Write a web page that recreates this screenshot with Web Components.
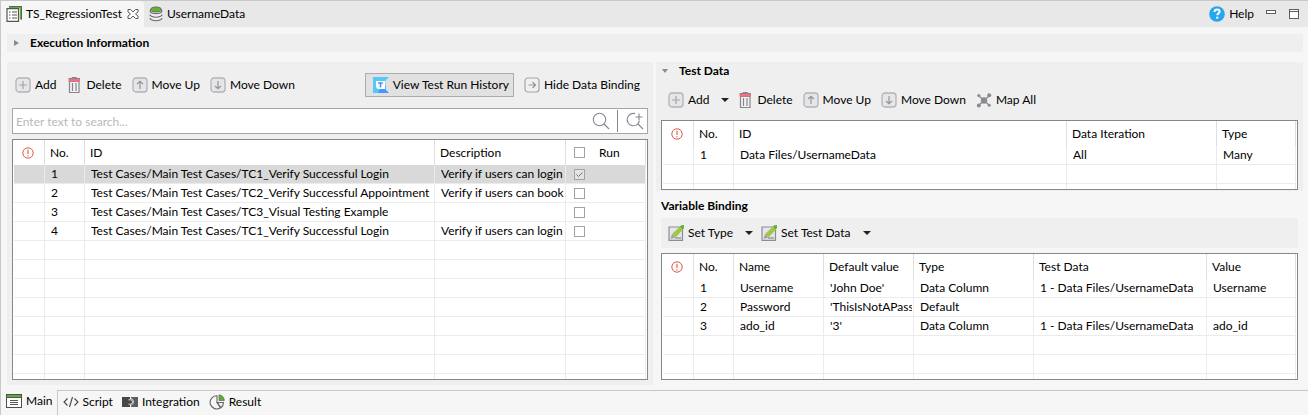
<!DOCTYPE html>
<html lang="en">
<head>
<meta charset="utf-8">
<title>TS_RegressionTest</title>
<style>
  html, body { margin: 0; height: 100%; }
  body { font: 12px/16px Lato, "Segoe UI", sans-serif; color: #000; background: #f6f6f6; }
</style>
</head>
<body>
<suite-editor></suite-editor>
<script>
const boxed = inner => `<svg width="16" height="16" viewBox="0 0 16 16" fill="none"><rect x="1" y="1" width="14" height="14" rx="3" fill="#e6e6e8" stroke="#b2b3b9" stroke-width="1.3"/>${inner}</svg>`;
const ICONS = {
  suite: `<svg width="16" height="16" viewBox="0 0 16 16" fill="none"><path d="M3 1h12v12.500" stroke="#5fae2f" stroke-width="2.400"/><path d="M3 .5h12.500v13" stroke="#555" stroke-width=".8"/><path d="M1 2.600h11.500v12.800h-11.500z" fill="#fff" stroke="#555" stroke-width="1.200"/><path d="M3 6h1.500m1.500 0h5M3 9h1.500m1.500 0h5M3 12h1.500m1.500 0h5" stroke="#555"/></svg>`,
  data: `<svg width="14" height="16" viewBox="0 0 14 16" fill="none"><path d="M1.500 3.500v9.500c0 1 2.500 2 5.500 2s5.500-1 5.500-2v-9.500" fill="#eee"/><ellipse cx="7" cy="3.500" rx="5.500" ry="2.500" fill="#5fb62d" stroke="#666"/><path d="M1.200 5.500c0 1 2.600 2.200 5.800 2.200s5.800-1.200 5.800-2.200M1.200 9c0 1 2.600 2.200 5.800 2.200s5.800-1.200 5.800-2.200M1.200 12.500c0 1 2.600 2.300 5.800 2.300s5.800-1.300 5.800-2.300" stroke="#666" stroke-width="1.100"/><path d="M1.300 4v2M12.700 4v2M1.300 8.500v1.500M12.700 8.500v1.500M1.300 12v1M12.700 12v1" stroke="#666"/></svg>`,
  close: `<svg width="12" height="12" viewBox="0 0 12 12" fill="#fff" stroke="#4a4a4a" stroke-width=".9"><path d="M1 1.500h2.500L6 4l2.500-2.500H11V4L8.500 6 11 8v2.500H8.500L6 8 3.500 10.500H1V8l2.500-2L1 4z"/></svg>`,
  help: `<svg width="16" height="16" viewBox="0 0 16 16"><circle cx="8" cy="8" r="7.800" fill="#26a6ee"/><path d="M5.500 6c0-1.600 1.100-2.500 2.600-2.500s2.500.9 2.500 2.200c0 1.700-2.300 1.700-2.300 3.500" fill="none" stroke="#fff" stroke-width="2"/><rect x="7.200" y="10.700" width="2.100" height="2" fill="#fff"/></svg>`,
  min: `<svg width="12" height="12" viewBox="0 0 12 12"><rect x="1.500" y="2.500" width="9" height="3" fill="#fff" stroke="#5d5d5d"/></svg>`,
  max: `<svg width="12" height="12" viewBox="0 0 12 12"><rect x="1.500" y="1.500" width="9" height="9" fill="#fff" stroke="#5d5d5d"/><path d="M1.500 3.500h9" stroke="#5d5d5d"/></svg>`,
  add: boxed(`<path d="M8 4v8M4 8h8" stroke="#a3a4ab" stroke-width="1.200"/>`),
  up: boxed(`<path d="M8 12V4.500M5 7l3-2.800L11 7" stroke="#92949c" stroke-width="1.200"/>`),
  down: boxed(`<path d="M8 4v7.500M5 9l3 2.800L11 9" stroke="#92949c" stroke-width="1.200"/>`),
  right: `<svg width="16" height="16" viewBox="0 0 16 16" fill="none"><rect x="1" y="1" width="14" height="14" rx="3" fill="#f0f0f0" stroke="#a5a6aa" stroke-width="1.200"/><path d="M4.500 8h7M8.500 5l3 3-3 3" stroke="#92949c" stroke-width="1.200"/></svg>`,
  trash: `<svg width="16" height="16" viewBox="0 0 16 16" fill="none"><path d="M6 1.500V.5h4.500v1" stroke="#85868d"/><path d="M3.500 4.500h9.500v11H3.500z" fill="#f3f3f4" stroke="#85868d" stroke-width="1.200"/><path d="M2.500 3.200h11.500" stroke="#f5707c" stroke-width="2.800"/><path d="M2.500 1.500h11.500" stroke="#85868d"/><path d="M6.500 6v8M10 6v8" stroke="#85868d" stroke-width="1.200"/></svg>`,
  map: `<svg width="16" height="16" viewBox="0 0 16 16" fill="#888b91"><path d="M3 4l10 9M3 13L13 4" stroke="#888b91" stroke-width="1.300"/><circle cx="8" cy="8.500" r="3.200"/><circle cx="2.800" cy="3.500" r="1.600"/><circle cx="13.200" cy="3.200" r="2"/><circle cx="2.800" cy="13.500" r="2"/><circle cx="13.200" cy="13.200" r="1.500"/></svg>`,
  edit: `<svg width="16" height="16" viewBox="0 0 16 16"><path d="M1 2h13.500v13.300H1z" fill="#e6e6e9" stroke="#8b8d96" stroke-width="1.200"/><path d="M7 13h6" stroke="#777"/><path d="M4 9L12 1.500l3 3L7.500 12.500z" fill="#9fc64a"/><path d="M12 1.700L13.200.3 16 .1v2.900l-1.200 1.500z" fill="#62b22e"/><path d="M4 9l3.500 3.500L2.500 14z" fill="#a0a1a8"/></svg>`,
  testops: `<svg width="16" height="16" viewBox="0 0 16 16"><path d="M0 0h16l-3.500 3.500v9L16 16H0z" fill="#56c9fb"/><path d="M5 16h11l-3.500-3.500V8L6 13z" fill="#4a97fb"/><path d="M3 4h9v8H6A3 3 0 0 1 3 9z" fill="#fff"/><path d="M5 6h5M7.500 6v4.500" stroke="#4a97e8" stroke-width="1.600"/></svg>`,
  search: `<svg width="18" height="18" viewBox="0 0 18 18" fill="none" stroke="#85878f" stroke-width="1.100"><circle cx="7.500" cy="7.500" r="6.200"/><path d="M12 12l5 5"/></svg>`,
  searchadd: `<svg width="18" height="18" viewBox="0 0 18 18" fill="none" stroke="#85878f" stroke-width="1.100"><path d="M9 1.600A6.200 6.200 0 1 0 13.400 9M12 12l5 5M13 1.500v7M9.500 5h7"/></svg>`,
  alert: `<svg width="12" height="12" viewBox="0 0 12 12" role="img" aria-label="Problems"><circle cx="6" cy="6" r="5.200" fill="#fff" stroke="#e2574c"/><path d="M6 2.700v4.200M6 8.200v1.200" stroke="#e2574c" stroke-width="1.100"/></svg>`,
  main: `<svg width="16" height="14" viewBox="0 0 16 14"><rect x=".5" y=".5" width="15" height="13" fill="#fff" stroke="#4d4d4d"/><path d="M1 2h14" stroke="#5fae2f" stroke-width="2"/><path d="M0 3.500h16M4 6.500h8M4 8.500h8M4 10.500h8" stroke="#555"/></svg>`,
  script: `<svg width="16" height="12" viewBox="0 0 16 12" fill="none" stroke="#444" stroke-width="1.100"><path d="M4.500 2.500L1 6l3.500 3.500M11.500 2.500L15 6l-3.500 3.500M9.500 1L6.500 11"/></svg>`,
  integration: `<svg width="16" height="12" viewBox="0 0 16 12"><path d="M0 1h8v2a3 3 0 0 1 0 6v2H0z" fill="#474747"/><path d="M9 1h7v10H9V9.800a4 4 0 0 0 0-7.600z" fill="#5d5d5d"/><path d="M6.500 3.800h2c2.600.3 2.600 4.100 0 4.400h-2" stroke="#fff" fill="none" stroke-width=".9"/></svg>`,
  result: `<svg width="16" height="16" viewBox="0 0 16 16" fill="none"><path d="M8 1.800A6.600 6.600 0 1 0 11.500 13.800L8 8.500z" stroke="#666" stroke-width="1.100"/><path d="M8.300 8.500h6.200c0 2.300-1 4-2.500 5.200z" stroke="#666" stroke-width="1.100"/><path d="M10 6.500V.8c3 .3 5.200 2.500 5.300 5.700z" fill="#5fae2f" stroke="#666" stroke-width=".7"/></svg>`,
  drop: `<svg width="8" height="4" viewBox="0 0 8 4"><path d="M0 0h8L4 4z" fill="#222"/></svg>`
};

const define = (name, css, html) => customElements.define(name, class extends HTMLElement {
  constructor() {
    super();
    this.attachShadow({ mode: "open" });
  }
  connectedCallback() {
    const t = document.createElement("template");
    t.innerHTML = `<style>*{box-sizing:border-box}svg{display:block;flex:none}${css}</style>${typeof html === "function" ? html(this) : html}`;
    this.shadowRoot.replaceChildren(t.content.cloneNode(true));
  }
});

define("tool-button", `
  :host { display: block; flex: none; }
  button { display: flex; align-items: center; gap: 4px; height: 24px; padding: 0; border: 0; background: none; font: inherit; color: inherit; white-space: nowrap; }
  :host([framed]) button { padding: 0 4px 0 7px; border: 1px solid #adadad; background: #e1e1e1; }
`, el => `<button type="button" ${el.getAttribute("label") ? `aria-label="${el.getAttribute("label")}"` : ""}>${ICONS[el.getAttribute("icon")]}<slot></slot></button>`);

define("tool-bar", `
  :host { display: flex; align-items: center; gap: 10px; }
`, `<slot></slot>`);

define("menu-arrow", `
  :host { display: block; flex: none; }
  button { display: flex; align-items: center; height: 24px; width: 12px; padding: 0 2px; border: 0; background: none; }
`, el => `<button type="button" aria-label="${el.getAttribute("label")}">${ICONS.drop}</button>`);

define("editor-tab", `
  :host { display: flex; flex: none; }
  button { display: flex; align-items: center; gap: 4px; height: 26px; padding: 0 5px; border: 0; background: none; font: inherit; color: inherit; white-space: nowrap; }
  :host([active]) { background: #f6f6f6; border-radius: 0 4px 0 0; }
  .x { padding: 0 5px 0 0; }
`, el => `<button type="button">${ICONS[el.getAttribute("icon")]}<slot></slot></button>${el.hasAttribute("active") ? `<button type="button" class="x" aria-label="Close tab">${ICONS.close}</button>` : ""}`);

define("section-title", `
  :host { display: block; }
  button { display: flex; align-items: center; width: 100%; height: 18px; padding: 0; border: 0; background: none; font: inherit; font-weight: 700; color: inherit; text-align: left; }
  i { flex: none; width: 23px; padding-left: 7px; }
  :host([open]) i { padding-left: 6px; }
`, el => `<button type="button" aria-expanded="${el.hasAttribute("open")}"><i>${el.hasAttribute("open")
    ? `<svg width="6" height="4" viewBox="0 0 6 4"><path d="M0 0h6L3 4z" fill="#868a91"/></svg>`
    : `<svg width="5" height="6" viewBox="0 0 5 6"><path d="M0 0v6l5-3z" fill="#868a91"/></svg>`}</i><slot></slot></button>`);

define("search-box", `
  :host { display: flex; align-items: center; height: 26px; border: 1px solid #a5a6aa; background: #fff; }
  input { flex: 1; min-width: 0; height: 24px; padding: 0 3px; border: 0; outline: 0; background: none; font: inherit; }
  input::placeholder { color: #b9b9b9; opacity: 1; }
  button { flex: none; padding: 0 7px; border: 0; background: none; }
  button + button { height: 22px; padding: 0 3px 0 8px; border-left: 1px solid #85878f; }
`, `<input type="text" placeholder="Enter text to search..." aria-label="Search test cases">
  <button type="button" aria-label="Search">${ICONS.search}</button><button type="button" aria-label="Advanced search">${ICONS.searchadd}</button>`);

const GRIDS = {
  cases: {
    label: "Test cases", blank: 8, selected: 0, cols: [31, 40, 0, 131, 80], heads: ["", "No.", "ID", "Description", "check:Run"],
    rows: [
      ["", "1", "Test Cases/Main Test Cases/TC1_Verify Successful Login", "Verify if users can login", "on"],
      ["", "2", "Test Cases/Main Test Cases/TC2_Verify Successful Appointment", "Verify if users can book", "off"],
      ["", "3", "Test Cases/Main Test Cases/TC3_Visual Testing Example", "", "off"],
      ["", "4", "Test Cases/Main Test Cases/TC1_Verify Successful Login", "Verify if users can login", "off"]
    ]
  },
  data: {
    label: "Test data", blank: 2, cols: [31, 40, 0, 150, 79], heads: ["", "No.", "ID", "Data Iteration", "Type"],
    rows: [["", "1", "Data Files/UsernameData", "All", "Many"]]
  },
  variables: {
    label: "Variable binding", blank: 3, cols: [31, 40, 90, 90, 120, 0, 89], heads: ["", "No.", "Name", "Default value", "Type", "Test Data", "Value"],
    rows: [
      ["", "1", "Username", "'John Doe'", "Data Column", "1 - Data Files/UsernameData", "Username"],
      ["", "2", "Password", "'ThisIsNotAPass", "Default", "", ""],
      ["", "3", "ado_id", "'3'", "Data Column", "1 - Data Files/UsernameData", "ado_id"]
    ]
  }
};

define("data-grid", `
  :host { display: block; min-height: 0; overflow: hidden; padding: 0 1px; border: 1px solid #828790; background: #fff; }
  table { width: 100%; table-layout: fixed; border-collapse: separate; border-spacing: 0; }
  th, td { padding: 0 1px 0 6px; text-align: left; font-weight: 400; border-right: 1px solid #ebebeb; white-space: nowrap; overflow: hidden; }
  th { height: 25px; padding-left: 5px; border-right-color: #dedede; }
  td { height: 19px; border-bottom: 1px solid #ebebeb; line-height: 18px; }
  th:first-child { padding-left: 8px; }
  .clip { overflow: hidden; }
  .on td { background: #d9d9d9; }
  .run { display: flex; align-items: center; gap: 14px; padding-left: 3px; }
  td .run { padding-left: 2px; }
  input { appearance: none; flex: none; width: 11px; height: 11px; margin: 0; border: 1px solid #a2a2a2; background: #fff; }
  input:checked { background: #e2e2e2 url("data:image/svg+xml,%3Csvg xmlns='http://www.w3.org/2000/svg' viewBox='0 0 9 9'%3E%3Cpath d='M1.500 4.500l2 2L7.500 2.500' fill='none' stroke='%23777'/%3E%3C/svg%3E"); }
`, el => {
  const g = GRIDS[el.getAttribute("source")];
  const head = h => h === "" ? ICONS.alert : h.startsWith("check:") ? `<div class="run"><input type="checkbox" aria-label="Run all"><span>${h.slice(6)}</span></div>` : h;
  const cell = (v, i) => v === "on" || v === "off" ? `<div class="run"><input type="checkbox" aria-label="Run row ${i + 1}" ${v === "on" ? "checked" : ""}></div>` : `<div class="clip">${v}</div>`;
  return `<table aria-label="${g.label}"><colgroup>${g.cols.map(w => `<col${w ? ` style="width:${w}px"` : ""}>`).join("")}</colgroup>
    <thead><tr>${g.heads.map(h => `<th scope="col">${head(h)}</th>`).join("")}</tr></thead>
    <tbody>${g.rows.map((r, i) => `<tr${g.selected === i ? ' class="on"' : ""}>${r.map(v => `<td>${cell(v, i)}</td>`).join("")}</tr>`).join("")}${`<tr>${"<td></td>".repeat(g.cols.length)}</tr>`.repeat(g.blank)}</tbody></table>`;
});

define("page-tab", `
  :host { display: block; flex: none; }
  button { display: flex; align-items: center; gap: 4px; height: 22px; padding: 0 4px 0 5px; border: 0; background: none; font: inherit; color: inherit; white-space: nowrap; }
`, el => `<button type="button">${ICONS[el.getAttribute("icon")]}<slot></slot></button>`);

define("suite-editor", `
  :host { display: flex; flex-direction: column; min-height: 100vh; border-top: 1px solid #c8c8c8; border-left: 1px solid #c8c8c8; background: #f6f6f6; box-sizing: border-box; }
  header { display: flex; align-items: center; height: 26px; padding-right: 8px; background: #e8e8e8; }
  header tool-button { margin-left: 11px; }
  .fill { flex: 1; }
  .exec { margin: 7px 5px 10px 6px; background: #efefef; }
  main { flex: 1; display: grid; grid-template-columns: minmax(0, 646fr) minmax(0, 647fr); gap: 3px; margin: 0 5px 5px 6px; }
  .left { display: flex; flex-direction: column; padding: 11px 5px 5px; background: #efefef; }
  .left tool-bar { padding: 0 8px 0 3px; margin-bottom: 11px; }
  .left data-grid { flex: 1 1 0; margin-top: 5px; }
  .right { display: flex; flex-direction: column; min-width: 0; }
  .data { padding: 0 5px 1px; background: #efefef; }
  .data section-title { margin: 0 -5px; }
  .data tool-bar { margin: 8px 0; padding-left: 7px; }
  .data data-grid { height: 70px; }
  h2 { margin: 7px 5px 4px; font: inherit; font-weight: 700; }
  .bar { height: 30px; margin: 0 5px; padding-left: 7px; background: #efefef; }
  .bind { margin: 5px 5px 0; }
  .bind data-grid { height: 127px; }
  menu-arrow { margin-right: -4px; }
  footer { display: flex; height: 25px; }
  .rest { flex: 1; display: flex; border-top: 1px solid #c8c8c8; border-left: 1px solid #c8c8c8; }
`, `
  <header>
    <editor-tab icon="suite" active>TS_RegressionTest</editor-tab>
    <editor-tab icon="data">UsernameData</editor-tab>
    <span class="fill"></span>
    <tool-button icon="help">Help</tool-button>
    <tool-button icon="min" label="Minimize"></tool-button>
    <tool-button icon="max" label="Maximize"></tool-button>
  </header>
  <section-title class="exec">Execution Information</section-title>
  <main>
    <section class="left">
      <tool-bar>
        <tool-button icon="add">Add</tool-button>
        <tool-button icon="trash">Delete</tool-button>
        <tool-button icon="up">Move Up</tool-button>
        <tool-button icon="down">Move Down</tool-button>
        <span class="fill"></span>
        <tool-button icon="testops" framed>View Test Run History</tool-button>
        <tool-button icon="right">Hide Data Binding</tool-button>
      </tool-bar>
      <search-box></search-box>
      <data-grid source="cases"></data-grid>
    </section>
    <div class="right">
      <section class="data">
        <section-title open>Test Data</section-title>
        <tool-bar>
          <tool-button icon="add">Add</tool-button>
          <menu-arrow label="Add options"></menu-arrow>
          <tool-button icon="trash">Delete</tool-button>
          <tool-button icon="up">Move Up</tool-button>
          <tool-button icon="down">Move Down</tool-button>
          <tool-button icon="map">Map All</tool-button>
        </tool-bar>
        <data-grid source="data"></data-grid>
      </section>
      <h2>Variable Binding</h2>
      <tool-bar class="bar">
        <tool-button icon="edit">Set Type</tool-button>
        <menu-arrow label="Set Type options"></menu-arrow>
        <tool-button icon="edit">Set Test Data</tool-button>
        <menu-arrow label="Set Test Data options"></menu-arrow>
      </tool-bar>
      <section class="bind"><data-grid source="variables"></data-grid></section>
    </div>
  </main>
  <footer>
    <page-tab icon="main">Main</page-tab>
    <div class="rest">
      <page-tab icon="script">Script</page-tab>
      <page-tab icon="integration">Integration</page-tab>
      <page-tab icon="result">Result</page-tab>
    </div>
  </footer>
`);
</script>
</body>
</html>
